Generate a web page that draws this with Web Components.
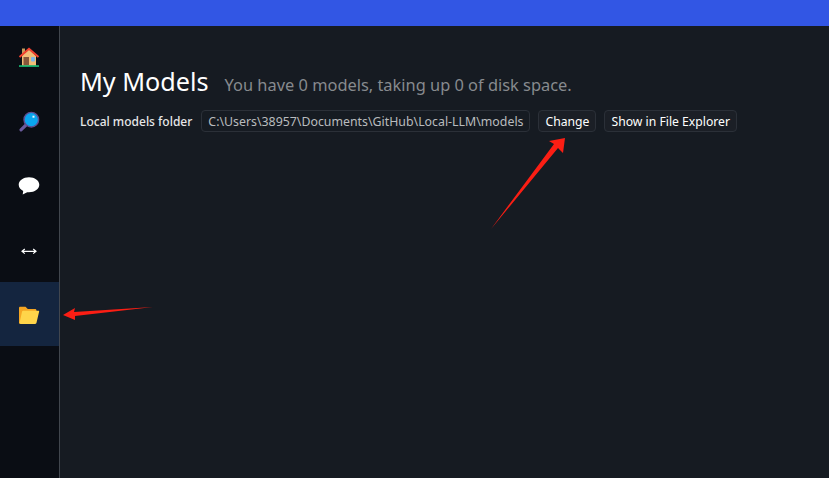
<!DOCTYPE html>
<html>
<head>
<meta charset="utf-8">
<title>My Models</title>
<style>
  html, body { margin: 0; height: 100%; overflow: hidden; background: #161b22; }
  body { font-family: "Noto Sans", "Open Sans", sans-serif; }
</style>
</head>
<body>
<app-shell>
  <nav-item slot="nav">
    <svg width="24" height="24" viewBox="0 0 24 24">
      <rect x="5" y="2.500" width="3" height="7" fill="#c99a5b"/>
      <path d="M5 10 12 3.500 19 10V19.500H5Z" fill="#f2bd78"/>
      <path d="M2.500 11 12 2.800 21.500 11" fill="none" stroke="#f4402f" stroke-width="2"/>
      <rect x="6.500" y="11" width="5.500" height="8.500" fill="#87563a"/>
      <rect x="14" y="11" width="4" height="4.500" rx="1" fill="#7db6e8"/>
      <rect x="2" y="19.400" width="20" height="1.300" fill="#19e68c"/>
    </svg>
  </nav-item>
  <nav-item slot="nav">
    <svg width="24" height="24" viewBox="0 0 24 24">
      <path d="M9 15 4 19.800" stroke="#6a5a9c" stroke-width="3.200" stroke-linecap="round"/>
      <circle cx="14.300" cy="9.700" r="7.300" fill="#0aa6ef" stroke="#5d4f92" stroke-width="1.400"/>
      <rect x="15.500" y="5.700" width="2" height="2" fill="#e8f6ff"/>
    </svg>
  </nav-item>
  <nav-item slot="nav">
    <svg width="24" height="24" viewBox="0 0 24 24">
      <path d="M12 3.300C6.300 3.300 1.700 6.600 1.700 10.800C1.700 13.700 3.700 15.800 6.200 16.900L5.700 20.400 10.200 18.200C10.800 18.300 11.400 18.300 12 18.300C17.700 18.300 22.300 15 22.300 10.800C22.300 6.600 17.700 3.300 12 3.300Z" fill="#fff"/>
    </svg>
  </nav-item>
  <nav-item slot="nav">
    <svg width="24" height="24" viewBox="0 0 24 24">
      <path d="M5 13.300H19M7.800 11 5 13.300 7.800 15.600M16.200 11 19 13.300 16.200 15.600" fill="none" stroke="#fff" stroke-width="1.200"/>
    </svg>
  </nav-item>
  <nav-item slot="nav" active>
    <svg width="24" height="24" viewBox="0 0 24 24">
      <path d="M2 6C2 5.300 2.500 4.800 3.300 4.800H8.500L10.800 7H18C19 7 19.500 7.600 19.500 8.500V11H6L3.300 21.500H2Z" fill="#f5a623"/>
      <path d="M6.200 8.800H21.500C22 8.800 22.300 9.300 22.100 9.800L19.500 20.800C19.300 21.500 18.900 22 18.200 22H3.500C2.800 22 2.400 21.500 2.600 20.800L5 9.700C5.100 9.200 5.600 8.800 6.200 8.800Z" fill="#ffd54a"/>
    </svg>
  </nav-item>

  <models-page
    count="You have 0 models, taking up 0 of disk space."
    folder="C:\Users\38957\Documents\GitHub\Local-LLM\models"></models-page>

  <!-- red annotation arrows drawn over the screenshot -->
  <mark-up slot="overlay"></mark-up>
</app-shell>

<script>
// outer frame: blue bar on top, rail on the left, page on the right
class AppShell extends HTMLElement {
  constructor() {
    super();
    this.attachShadow({ mode: "open" });
  }

  connectedCallback() {
    this.shadowRoot.innerHTML = `
      <style>
        :host {
          display: grid;
          grid-template-rows: 26px 1fr;
          grid-template-columns: 60px 1fr;
          width: 829px;
          height: 478px;
          position: relative;
          overflow: hidden;
          background: #161b22;
        }
        .bar { grid-column: 1 / 3; background: #3256e4; }
        nav {
          display: flex;
          flex-direction: column;
          background: #0a0d14;
          border-right: 1px solid #41464e;
        }
        main { min-width: 0; }
      </style>
      <div class="bar"></div>
      <nav><slot name="nav"></slot></nav>
      <main><slot></slot></main>
      <slot name="overlay"></slot>
    `;
  }
}

class NavItem extends HTMLElement {
  constructor() {
    super();
    this.attachShadow({ mode: "open" });
  }

  connectedCallback() {
    this.shadowRoot.innerHTML = `
      <style>
        :host {
          display: flex;
          align-items: center;
          justify-content: center;
          height: 64px;
          padding-right: 2px;
        }
        :host([active]) { background: #14253f; }
      </style>
      <slot></slot>
    `;
  }
}

class UiChip extends HTMLElement {
  constructor() {
    super();
    this.attachShadow({ mode: "open" });
  }

  connectedCallback() {
    this.shadowRoot.innerHTML = `
      <style>
        :host {
          display: inline-flex;
          align-items: center;
          height: 22px;
          box-sizing: border-box;
          padding: 0 6px;
          border: 1px solid #2b3038;
          border-radius: 4px;
          background: #1b1f26;
          color: #fff;
          font-size: 12.2px;
          white-space: nowrap;
        }
        :host([muted]) { background: #161b22; color: #b9bbbe; font-size: 12.35px; }
      </style>
      <slot></slot>
    `;
  }
}

class ModelsPage extends HTMLElement {
  constructor() {
    super();
    this.attachShadow({ mode: "open" });
  }

  connectedCallback() {
    this.shadowRoot.innerHTML = `
      <style>
        :host { display: block; padding: 38px 20px 0 20px; }
        .head { display: flex; align-items: baseline; gap: 16px; height: 36px; }
        h1 { margin: 0; font-size: 25.2px; font-weight: 400; line-height: 34px; color: #fff; }
        .sub { font-size: 16.4px; color: #878a8e; }
        .row { display: flex; align-items: center; margin-top: 10px; }
        .label { font-size: 12px; font-weight: 500; color: #e6e7e8; margin-right: 9px; }
        ui-chip + ui-chip { margin-left: 8px; }
      </style>
      <div class="head">
        <h1>My Models</h1>
        <span class="sub">${this.getAttribute("count")}</span>
      </div>
      <div class="row">
        <span class="label">Local models folder</span>
        <ui-chip muted>${this.getAttribute("folder")}</ui-chip>
        <ui-chip>Change</ui-chip>
        <ui-chip>Show in File Explorer</ui-chip>
      </div>
    `;
  }
}

class MarkUp extends HTMLElement {
  constructor() {
    super();
    this.attachShadow({ mode: "open" });
  }

  connectedCallback() {
    this.shadowRoot.innerHTML = `
      <style>
        :host { position: absolute; inset: 0; pointer-events: none; }
      </style>
      <svg width="829" height="478" viewBox="0 0 829 478">
        <path d="M63 315 75 308 74 312 153 307 75 316 75 320Z" fill="#fb1e14"/>
        <path d="M565 138 563 153 558 148 491 229 554 144 549 141Z" fill="#fb1e14"/>
      </svg>
    `;
  }
}

customElements.define("app-shell", AppShell);
customElements.define("nav-item", NavItem);
customElements.define("ui-chip", UiChip);
customElements.define("models-page", ModelsPage);
customElements.define("mark-up", MarkUp);
</script>
</body>
</html>
